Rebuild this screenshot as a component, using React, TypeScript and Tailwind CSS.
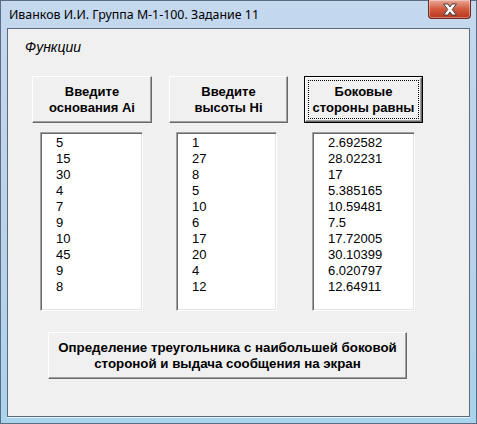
const LIST_A = ['5', '15', '30', '4', '7', '9', '10', '45', '9', '8']
const LIST_H = ['1', '27', '8', '5', '10', '6', '17', '20', '4', '12']
const LIST_SIDES = [
  '2.692582',
  '28.02231',
  '17',
  '5.385165',
  '10.59481',
  '7.5',
  '17.72005',
  '30.10399',
  '6.020797',
  '12.64911',
]

type ButtonProps = {
  children: React.ReactNode
  className?: string
  textSize?: string
  isDefault?: boolean
}

function ClassicButton({
  children,
  className,
  textSize = 'text-[13px]',
  isDefault,
}: ButtonProps) {
  if (isDefault) {
    return (
      <div className={`border border-black bg-[#f0f0f0] ${className ?? ''}`}>
        <div className="h-full w-full border-t border-l border-white border-r border-b border-r-[#696969] border-b-[#696969] shadow-[inset_-1px_-1px_0_#a0a0a0]">
          <div
            className={`m-[2px] flex h-[calc(100%-4px)] items-center justify-center border border-dotted border-black text-center ${textSize} leading-[16px] font-bold text-black`}
          >
            {children}
          </div>
        </div>
      </div>
    )
  }
  return (
    <div
      className={`flex items-center justify-center border-t border-l border-white border-r border-b border-r-[#696969] border-b-[#696969] bg-[#f0f0f0] text-center ${textSize} leading-[16px] font-bold text-black shadow-[inset_-1px_-1px_0_#a0a0a0] ${className ?? ''}`}
    >
      <div>{children}</div>
    </div>
  )
}

function ListBox({ items, width }: { items: string[]; width: string }) {
  return (
    <div
      className={`h-[179px] ${width} border border-t-[#a0a0a0] border-l-[#a0a0a0] border-r-white border-b-white bg-white shadow-[inset_1px_1px_0_#696969,inset_-1px_-1px_0_#e3e3e3]`}
    >
      <div className="pt-[2px] pl-[15px] text-[13px] leading-[16px] text-black">
        {items.map((item, i) => (
          <div key={i}>{item}</div>
        ))}
      </div>
    </div>
  )
}

function CloseButton() {
  return (
    <div className="flex h-[19px] w-[43px] items-center justify-center rounded-b-[4px] border border-t-0 border-[#6e2a1e] bg-gradient-to-b from-[#e9a897] via-[#d25a3f] to-[#b8351c] shadow-[inset_0_0_0_1px_rgba(255,255,255,0.35)]">
      <svg width="16" height="13" viewBox="0 0 15 12">
        <path
          d="M1.5 0.8 L5.5 0.8 L7.5 3.6 L9.5 0.8 L13.5 0.8 L9.6 6 L13.5 11.2 L9.5 11.2 L7.5 8.4 L5.5 11.2 L1.5 11.2 L5.4 6 Z"
          fill="#ffffff"
          stroke="#3a3a3a"
          strokeWidth="0.9"
          strokeLinejoin="round"
        />
      </svg>
    </div>
  )
}

export default function App() {
  return (
    <div
      className="flex h-[424px] w-[477px] flex-col border border-[#5b6d83] bg-gradient-to-b from-[#c4d8ee] via-[#bcd2ea] to-[#a9d3ec] pr-[6px] pb-[6px] pl-[6px]"
      style={{ fontFamily: '"Liberation Sans", Arial, sans-serif' }}
    >
      {/* title bar */}
      <div className="flex h-[27px] shrink-0 items-start justify-between">
        <div
          className="pt-[6px] pl-[2px] text-[12.4px] leading-[16px] text-black"
          style={{ fontFamily: '"Noto Sans", "Open Sans", sans-serif' }}
        >
          Иванков И.И. Группа М-1-100. Задание 11
        </div>
        <div className="-mt-[1px] -mr-[1px]">
          <CloseButton />
        </div>
      </div>

      {/* client area */}
      <div className="flex-1 border border-[#5c6b7a] bg-[#f0f0f0] shadow-[0_1px_0_#e8f2fb]">
        <div className="pt-[10px] pl-[17px] text-[14px] leading-[16px] text-black italic">
          Функции
        </div>

        <div className="mt-[21px] ml-[24px] flex gap-[16px]">
          <ClassicButton className="h-[47px] w-[120px]">
            Введите
            <br />
            основания Ai
          </ClassicButton>
          <ClassicButton className="ml-[1px] h-[47px] w-[119px]">
            Введите
            <br />
            высоты Hi
          </ClassicButton>
          <ClassicButton isDefault className="h-[47px] w-[119px]">
            Боковые
            <br />
            стороны равны
          </ClassicButton>
        </div>

        <div className="mt-[9px] ml-[32px] flex">
          <ListBox items={LIST_A} width="w-[103px]" />
          <div className="ml-[33px]">
            <ListBox items={LIST_H} width="w-[101px]" />
          </div>
          <div className="ml-[35px]">
            <ListBox items={LIST_SIDES} width="w-[103px]" />
          </div>
        </div>

        <div className="mt-[21px] ml-[40px]">
          <ClassicButton className="h-[47px] w-[359px]" textSize="text-[13.3px]">
            Определение треугольника с наибольшей боковой
            <br />
            стороной и выдача сообщения на экран
          </ClassicButton>
        </div>
      </div>
    </div>
  )
}
